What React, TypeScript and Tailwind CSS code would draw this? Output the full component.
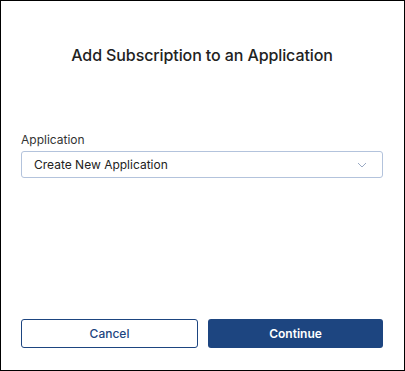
export default function App() {
  return (
    <div
      className="w-[405px] h-[371px] bg-white border border-black flex flex-col pl-5 pr-[21px] text-[#222]"
      style={{ fontFamily: "Inter, 'Noto Sans', sans-serif" }}
    >
      <h1 className="mt-[44px] text-center text-[16px] leading-5 font-medium tracking-[-0.1px]">
        Add Subscription to an Application
      </h1>

      <div className="mt-[67px] flex flex-col">
        <label className="text-[12px] leading-4 text-[#333]">Application</label>
        <button className="mt-[3px] h-[27px] w-full flex items-center justify-between pl-3 pr-[15px] border border-[#b3c3dc] rounded-[3px] bg-white text-[12px] text-[#222]">
          <span>Create New Application</span>
          <svg width="10" height="6" viewBox="0 0 10 6" fill="none">
            <path d="M1 1l4 4 4-4" stroke="#9aaac4" strokeWidth="1" />
          </svg>
        </button>
      </div>

      <div className="mt-auto mb-[22px] flex gap-[10px]">
        <button className="flex-1 h-[29px] rounded-[3px] border border-[#1d4580] text-[#1d4580] text-[12px] font-medium bg-white">
          Cancel
        </button>
        <button className="flex-1 h-[29px] rounded-[3px] bg-[#1d4580] text-white text-[12px] font-semibold">
          Continue
        </button>
      </div>
    </div>
  );
}
